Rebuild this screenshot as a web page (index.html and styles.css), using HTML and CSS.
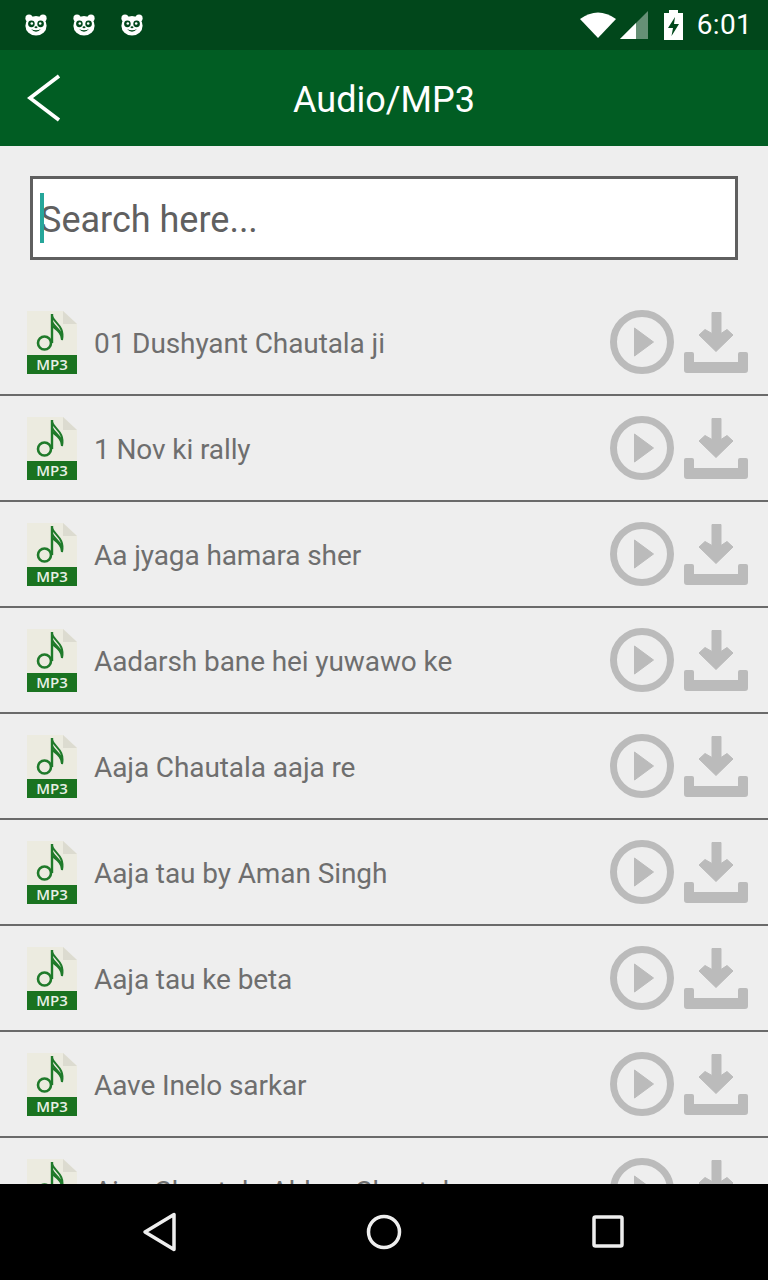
FILE: index.html
```html
<!DOCTYPE html>
<html lang="en">
<head>
<meta charset="utf-8">
<title>Audio/MP3</title>
<link rel="stylesheet" href="styles.css">
</head>
<body>
<svg class="defs" width="0" height="0" aria-hidden="true">
  <symbol id="panda" viewBox="0 0 22 22">
    <circle cx="4" cy="4.2" r="3.6" fill="#fff"/>
    <circle cx="18" cy="4.2" r="3.6" fill="#fff"/>
    <ellipse cx="11" cy="11.8" rx="10.6" ry="9.8" fill="#fff"/>
    <ellipse cx="6.400" cy="9.800" rx="3.300" ry="3.400" fill="#01471b"/>
    <ellipse cx="15.600" cy="9.800" rx="3.300" ry="3.400" fill="#01471b"/>
    <circle cx="6.800" cy="9.500" r="1.300" fill="#fff"/>
    <circle cx="15.200" cy="9.500" r="1.300" fill="#fff"/>
    <ellipse cx="11" cy="13.300" rx="1.500" ry="1" fill="#01471b"/>
    <path d="M6 15 Q11 20.500 16 15 Q11 17.500 6 15Z" fill="#01471b"/>
  </symbol>
  <symbol id="mp3" viewBox="0 0 50 64">
    <path d="M0 1H36L50 14V50H0Z" fill="#ecebe0"/>
    <path d="M36 1L50 14H36Z" fill="#dcdbd0"/>
    <path d="M25 4V33" stroke="#1f7a2a" stroke-width="2.400" fill="none"/>
    <circle cx="17.500" cy="33" r="6.500" fill="none" stroke="#1f7a2a" stroke-width="2.600"/>
    <path d="M25 6C27 13 38 16 35 30C35 23 30 20 25 16M25 12C28 18 35 20 35 28" fill="none" stroke="#1f7a2a" stroke-width="2"/>
    <rect x="0" y="45" width="50" height="19" fill="#1a7320"/>
  </symbol>
  <symbol id="play" viewBox="0 0 64 64">
    <circle cx="32" cy="32" r="28.500" fill="none" stroke="#bbb" stroke-width="7"/>
    <path d="M24.500 18L43.500 32L24.500 46Z" fill="#bbb" stroke="#bbb" stroke-width="1" stroke-linejoin="round"/>
  </symbol>
  <symbol id="download" viewBox="0 0 64 64">
    <path d="M28 2.500H37V23.500L43 19.500L49 25L32 41.500L15 25L21 19.500L28 23.500Z" fill="#bbb" stroke="#bbb" stroke-width="1" stroke-linejoin="round"/>
    <path d="M0 44Q0 42 2 42H8Q10 42 10 44V52H54V44Q54 42 56 42H62Q64 42 64 44V60Q64 63 61 63H3Q0 63 0 60Z" fill="#bbb"/>
  </symbol>
</svg>
<div class="screen">
  <header class="status-bar">
    <div class="notifs">
      <svg class="panda"><use href="#panda"/></svg>
      <svg class="panda"><use href="#panda"/></svg>
      <svg class="panda"><use href="#panda"/></svg>
    </div>
    <div class="sys">
      <svg class="wifi" viewBox="0 0 36 26"><path d="M0 7Q18 -6 36 7L18 26Z" fill="#fff"/></svg>
      <svg class="signal" viewBox="0 0 28 28"><path d="M0 28L28 0V28Z" fill="#fff" fill-opacity=".4"/><path d="M0 28L16 12V28Z" fill="#fff"/></svg>
      <svg class="battery" viewBox="0 0 19 30"><path fill-rule="evenodd" d="M5 0H14V3H19V30H0V3H5ZM11 7L4 18H9L7.500 26L15 14H10Z" fill="#fff"/></svg>
      <span class="clock">6:01</span>
    </div>
  </header>
  <div class="toolbar">
    <svg class="back" viewBox="0 0 34 48"><path d="M32 2L3 24L32 46" fill="none" stroke="#fff" stroke-width="3.800"/></svg>
    <h1 class="title">Audio/MP3</h1>
  </div>
  <main class="content">
    <div class="search"><span class="caret"></span><span class="placeholder">Search here...</span></div>
    <ul class="list">
      <li class="row"><span class="file"><svg class="file-svg"><use href="#mp3"/></svg><span class="file-label">MP3</span></span><span class="name">01 Dushyant Chautala ji</span><svg class="act"><use href="#play"/></svg><svg class="act"><use href="#download"/></svg></li>
      <li class="row"><span class="file"><svg class="file-svg"><use href="#mp3"/></svg><span class="file-label">MP3</span></span><span class="name">1 Nov ki rally</span><svg class="act"><use href="#play"/></svg><svg class="act"><use href="#download"/></svg></li>
      <li class="row"><span class="file"><svg class="file-svg"><use href="#mp3"/></svg><span class="file-label">MP3</span></span><span class="name">Aa jyaga hamara sher</span><svg class="act"><use href="#play"/></svg><svg class="act"><use href="#download"/></svg></li>
      <li class="row"><span class="file"><svg class="file-svg"><use href="#mp3"/></svg><span class="file-label">MP3</span></span><span class="name">Aadarsh bane hei yuwawo ke</span><svg class="act"><use href="#play"/></svg><svg class="act"><use href="#download"/></svg></li>
      <li class="row"><span class="file"><svg class="file-svg"><use href="#mp3"/></svg><span class="file-label">MP3</span></span><span class="name">Aaja Chautala aaja re</span><svg class="act"><use href="#play"/></svg><svg class="act"><use href="#download"/></svg></li>
      <li class="row"><span class="file"><svg class="file-svg"><use href="#mp3"/></svg><span class="file-label">MP3</span></span><span class="name">Aaja tau by Aman Singh</span><svg class="act"><use href="#play"/></svg><svg class="act"><use href="#download"/></svg></li>
      <li class="row"><span class="file"><svg class="file-svg"><use href="#mp3"/></svg><span class="file-label">MP3</span></span><span class="name">Aaja tau ke beta</span><svg class="act"><use href="#play"/></svg><svg class="act"><use href="#download"/></svg></li>
      <li class="row"><span class="file"><svg class="file-svg"><use href="#mp3"/></svg><span class="file-label">MP3</span></span><span class="name">Aave Inelo sarkar</span><svg class="act"><use href="#play"/></svg><svg class="act"><use href="#download"/></svg></li>
      <li class="row"><span class="file"><svg class="file-svg"><use href="#mp3"/></svg><span class="file-label">MP3</span></span><span class="name">Ajay Chautala Abhay Chautala</span><svg class="act"><use href="#play"/></svg><svg class="act"><use href="#download"/></svg></li>
    </ul>
  </main>
  <nav class="navbar">
    <svg class="nav-icon" viewBox="0 0 36 40"><path d="M3 20L32 2.500V37.500Z" fill="none" stroke="#eee" stroke-width="3.500" stroke-linejoin="round"/></svg>
    <svg class="nav-icon" viewBox="0 0 36 40"><circle cx="18" cy="20" r="15.500" fill="none" stroke="#eee" stroke-width="3.500"/></svg>
    <svg class="nav-icon" viewBox="0 0 36 40"><rect x="4" y="5" width="28" height="29" rx="1.500" fill="none" stroke="#eee" stroke-width="3.500"/></svg>
  </nav>
</div>
</body>
</html>
```
FILE: styles.css
```css
* { box-sizing: border-box; }
html, body { margin: 0; padding: 0; }
body { font-family: Roboto, "Liberation Sans", sans-serif; background: #000; }
.defs { display: block; height: 0; }
.screen { width: 768px; height: 1280px; display: flex; flex-direction: column; overflow: hidden; }

.status-bar { flex: 0 0 50px; background: #01471b; display: flex; align-items: center; justify-content: space-between; padding: 0 16px 0 25px; }
.notifs { display: flex; gap: 26px; }
.panda { width: 22px; height: 22px; display: block; }
.sys { display: flex; align-items: center; }
.wifi { width: 36px; height: 26px; margin-right: 4px; }
.signal { width: 28px; height: 28px; margin-right: 16px; }
.battery { width: 19px; height: 30px; margin-right: 14px; }
.clock { color: #fff; font-size: 28px; line-height: 32px; letter-spacing: .3px; }

.toolbar { flex: 0 0 96px; background: #015d23; display: flex; align-items: center; justify-content: center; position: relative; }
.back { position: absolute; left: 27px; top: 24px; width: 34px; height: 48px; }
.title { margin: 0; padding-top: 3px; color: #fff; font-size: 36px; font-weight: 400; }

.content { flex: 1 1 auto; min-height: 0; background: #eeeeee; overflow: hidden; padding-top: 30px; }
.search { margin: 0 30px; height: 84px; background: #fff; border: 3px solid #5f5f5f; display: flex; align-items: center; padding-left: 7px; position: relative; }
.caret { position: absolute; left: 7px; top: 14px; width: 4px; height: 50px; background: #26a69a; }
.placeholder { color: #606060; font-size: 36px; padding-top: 3px; }

.list { list-style: none; margin: 30px 0 0; padding: 0; }
.row { height: 106px; border-bottom: 2px solid #6a6a6a; display: flex; align-items: center; padding: 0 20px 0 27px; }
.file { width: 50px; height: 64px; position: relative; flex: none; }
.file-svg { width: 50px; height: 64px; display: block; }
.file-label { position: absolute; left: 0; right: 0; bottom: 1px; text-align: center; color: #e8efe6; font-size: 15px; line-height: 18px; font-family: "Open Sans", sans-serif; font-weight: 600; }
.name { flex: 1 1 auto; margin-left: 17px; padding-top: 2px; color: #6e6e6e; font-size: 28px; letter-spacing: -.1px; white-space: nowrap; }
.act { width: 64px; height: 64px; flex: none; margin-left: 10px; }

.navbar { flex: 0 0 96px; background: #000; display: flex; align-items: center; justify-content: center; gap: 188px; }
.nav-icon { width: 36px; height: 40px; }
```
